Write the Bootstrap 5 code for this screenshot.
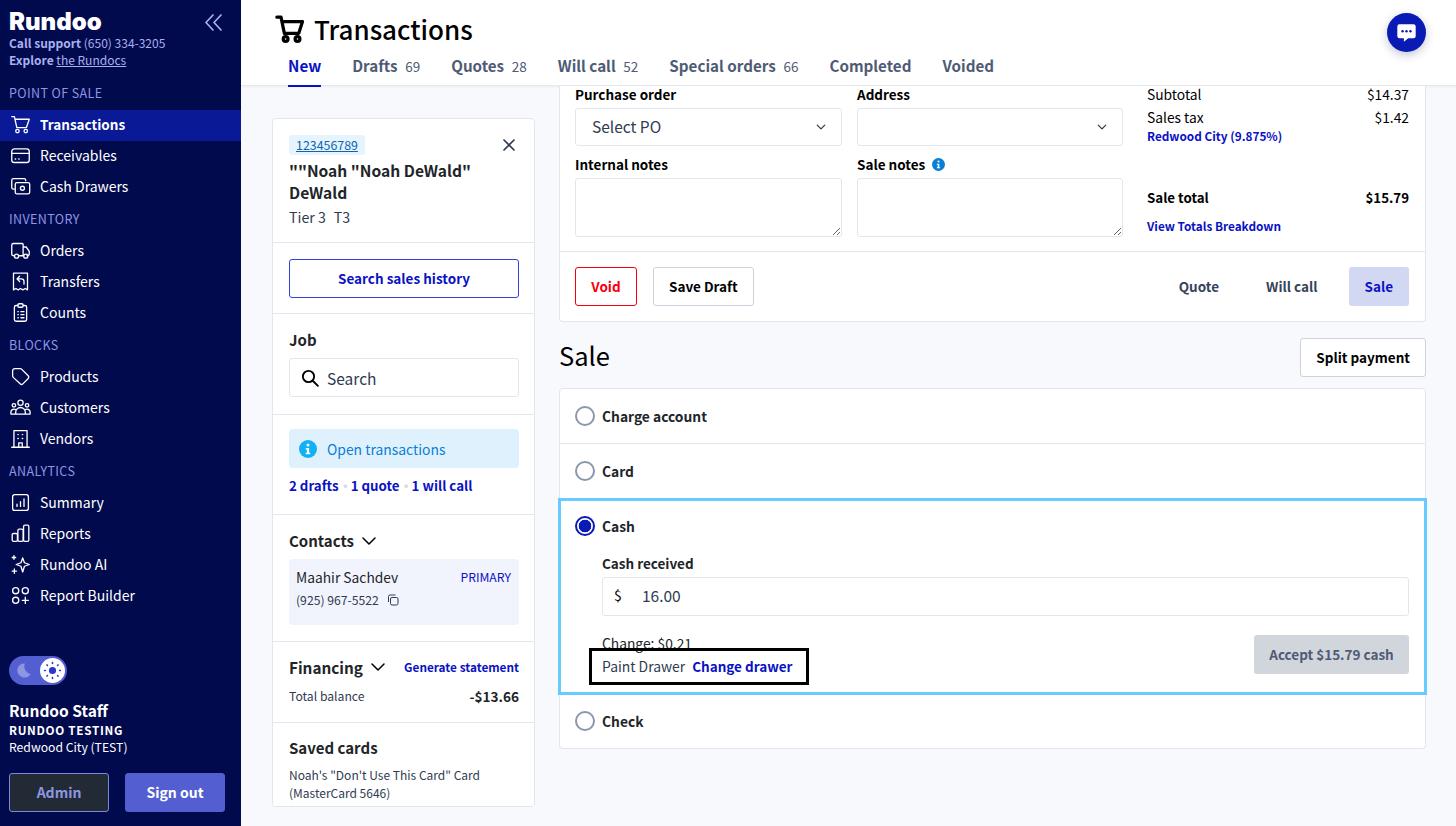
<!DOCTYPE html>
<html lang="en">
<head>
  <meta charset="UTF-8" />
  <meta name="viewport" content="width=device-width, initial-scale=1" />
  <title>Transactions</title>
  <link href="https://cdn.jsdelivr.net/npm/bootstrap@5.3.3/dist/css/bootstrap.min.css" rel="stylesheet" />
  <style>
    html, body { height: 100%; }
    body { font-family: "Noto Sans CJK SC", "Liberation Sans", sans-serif; font-size: 13.8px; line-height: 20px; background: #f8f9fc; color: #000; overflow: hidden; }
    a { text-decoration: none; }
    .sbw { font-weight: 600; }
    .txt-blue { color: #0a12c4; }
    .txt-slate { color: #2f3b52; }

    /* sidebar */
    .side { width: 241px; height: 826px; background: #020a4e; color: #fff; flex: none; }
    .side-logo { font-family: "Inter", sans-serif; font-weight: 900; font-size: 24px; line-height: 24px; padding: 10px 9px 0; }
    .side-collapse { margin: 13px 18px 0 0; }
    .side-help { padding: 0 9px; font-size: 12px; line-height: 17px; color: #a9b0ee; }
    .side-help a { color: #a9b0ee; text-decoration: underline; }
    .side-head { font-size: 12.5px; line-height: 20px; letter-spacing: .4px; color: #8e96e2; padding: 0 9px; margin-top: 5.5px; margin-bottom: 7.5px; }
    .side-head.first { margin-top: 15px; margin-bottom: 7px; }
    .side-link { color: #fff; height: 31px; padding: 0 10px 3px; gap: 9px; font-size: 14px; display: flex; align-items: center; }
    .side-link:hover, .side-link:focus { color: #fff; }
    .side-link.active { background: #0a1a96; font-weight: 700; font-size: 13.5px; }
    .side-link svg { width: 21px; height: 21px; flex: none; fill: none; stroke: #fff; stroke-width: 1.5; stroke-linecap: round; stroke-linejoin: round; }
    .side-toggle { width: 58px; height: 29px; border-radius: 15px; background: #535ed0; margin: 0 0 0 9px; padding: 2px; }
    .side-knob { width: 25px; height: 25px; border-radius: 50%; background: #fff; }
    .side-user { padding: 0 9px; margin-top: 14px; }
    .side-name { font-size: 15.5px; line-height: 22px; font-weight: 700; }
    .side-org { font-size: 11.7px; line-height: 17px; font-weight: 700; letter-spacing: .7px; }
    .side-loc { font-size: 12.2px; line-height: 19px; }
    .side-btns { padding: 16px 16px 14px 9px; gap: 16px; }
    .side-btns .btn { flex: 1; height: 39px; font-size: 14px; font-weight: 600; padding: 0; border-radius: 3px; }
    .btn-admin { background: #222b35; border: 1px solid #7f88d8; color: #8e96e2; }
    .btn-out { background: #535ed0; border: 1px solid #535ed0; color: #fff; }

    /* header */
    .top-bar { height: 86px; background: #fff; border-bottom: 1px solid #e6e8ee; box-shadow: 0 1px 2px rgba(20, 30, 60, .06); padding: 0 0 0 34px; flex: none; }
    .top-title { font-size: 26px; line-height: 36px; font-weight: 500; margin: 0; padding-top: 11px; gap: 9px; }
    .top-tabs { padding-left: 13px; gap: 31px; margin-top: 1px; }
    .top-tab { color: #4f5b75; font-size: 15.2px; font-weight: 600; line-height: 24px; padding: 5px 0 7px; border-bottom: 2px solid transparent; }
    .top-tab span { font-weight: 400; font-size: 13.5px; margin-left: 4.2px; }
    .top-tab.active { color: #0a12c4; border-bottom-color: #0a12c4; }
    .chat-btn { top: 13px; right: 30px; width: 39px; height: 39px; border-radius: 50%; background: #0a1ab4; box-shadow: 0 3px 10px rgba(20, 30, 90, .25); }

    /* cards */
    .page-body { padding: 0 30px 0 31px; gap: 24px; }
    .cust-card { width: 263px; height: 689px; margin-top: 32px; flex: none; overflow: hidden; border-color: #e3e6ee; border-radius: 4px; }
    .cust-card .list-group-item { padding: 16px 15px 16px 16px; border-color: #e3e6ee; }
    .cust-id { background: #e7f4fd; color: #0a66b0; font-size: 12.4px; line-height: 20px; padding: 0 7px; border-radius: 3px; text-decoration: underline; }
    .cust-name { font-size: 15.6px; line-height: 22px; font-weight: 700; }
    .cust-tier { font-size: 14.2px; gap: 8px; }
    .cust-h { font-size: 15px; line-height: 20px; font-weight: 600; }
    .btn-hist { height: 39px; border: 1px solid #3340e0; color: #0a12c4; font-weight: 600; border-radius: 3px; padding: 0; font-size: 13.5px; }
    .fake-input { height: 39px; border: 1px solid #e3e6ee; border-radius: 3px; padding: 0 11px; gap: 8px; font-size: 15.5px; color: #2f3b52; }
    .info-box { height: 39px; background: #dff1fd; border-radius: 4px; color: #0a7ed8; padding: 0 10px; gap: 10px; font-size: 13.9px; }
    .tx-links { font-size: 13.3px; }
    .dot-sep { color: #d6dae4; display: inline-block; width: 12px; text-align: center; overflow: hidden; vertical-align: top; }
    .contact-box { height: 66px; background: #f2f4fd; border-radius: 3px; padding: 8px 8px 0 7px; }
    .fin-h { font-size: 15.3px; line-height: 24px; font-weight: 600; }
    .link-sm { font-size: 11.8px; font-weight: 600; color: #0a12c4; white-space: nowrap; }
    .card-note { font-size: 12px; line-height: 18px; color: #2f3b52; }

    .sale-col { min-width: 0; }
    .order-card { border-color: #e3e6ee; border-top: 0; border-radius: 0 0 4px 4px; height: 236px; }
    .order-top { padding: 0 16px 0 15px; height: 166px; gap: 15px; }
    .order-left { width: 267px; flex: none; }
    .order-mid { width: 266px; flex: none; }
    .order-sum { flex: 1; margin-left: 9px; line-height: 16px; }
    .fld-label { font-size: 13.5px; line-height: 16px; font-weight: 600; display: block; margin-bottom: 6px; }
    .fld-label.lower { margin-top: 10px; }
    .order-top .form-select, .order-top .form-control { border-color: #e3e6ee; border-radius: 3px; box-shadow: none; }
    .order-top .form-select { height: 38px; font-size: 15.5px; color: #2f3b52; padding: 0 16px; background-position: right 14px center; background-size: 12px 10px; }
    .order-top .form-control { height: 59px; }
    .sum-link { font-size: 11.8px; line-height: 17px; }
    .order-foot { border-top: 1px solid #e3e6ee; padding: 15px 16px 15px 15px; }
    .btn-void { color: #f5000f; border: 1px solid #f5000f; background: #fff; font-weight: 600; height: 39px; width: 62px; padding: 0; font-size: 13.5px; border-radius: 3px; }
    .btn-plain { color: #000; border: 1px solid #cdd2de; background: #fff; font-weight: 600; height: 39px; padding: 0 15px; font-size: 13.5px; border-radius: 3px; }
    .btn-ghost { color: #36435c; font-weight: 600; height: 39px; padding: 0 16px; font-size: 13.5px; border: 0; }
    .btn-sale { color: #0a12c4; background: #d2d7f2; font-weight: 600; height: 39px; padding: 0 16px; font-size: 13.5px; border: 0; border-radius: 3px; }
    .foot-right { gap: 15px; }
    .sale-h { font-size: 25.5px; line-height: 36px; font-weight: 400; margin: 0; padding-bottom: 4px; }
    .sale-row { height: 38px; margin: 16px 0 12px; }
    .pay-list { border-radius: 4px; overflow: visible; }
    .pay-list .list-group-item { border-color: #e3e6ee; padding: 0 15px; }
    .pay-rad { height: 54px; gap: 7px; font-weight: 700; font-size: 13.8px; }
    .pay-rad .form-check-input { width: 20px; height: 20px; margin: 0; border: 2px solid #8b97aa; flex: none; }
    .pay-rad .form-check-input:checked { border-color: #0a1ab4; background-color: #fff; background-image: radial-gradient(circle, #0a1ab4 0 6px, #fff 6.6px); }
    .pay-list .pay-cash.list-group-item { border: 3px solid #66ccff; margin: -1px; height: 197px; position: relative; z-index: 1; padding: 0 15px 0 14px; }
    .pay-cash .pay-rad { height: 50px; }
    .pay-rest { padding-left: 27px; padding-top: 4px; }
    .cash-field { height: 39px; border: 1px solid #e3e6ee; border-radius: 3px; padding: 0 11px 3px; font-size: 15.5px; color: #2f3b52; }
    .cash-field b { font-weight: 400; color: #000; width: 28px; font-size: 14px; }
    .cash-foot { margin-top: 19px; }
    .change-line { line-height: 16px; }
    .drawer-box { border: 3px solid #000; height: 37px; margin: -3px 0 0 -13px; padding: 0 10px 2px; width: 220px; gap: 7px; position: relative; white-space: nowrap; font-size: 13.5px; }
    .drawer-box .txt-slate { font-size: 13.9px; }
    .btn-accept { background: #d1d5dc; color: #4f5b75; font-weight: 600; height: 39px; width: 155px; padding: 0; font-size: 13.5px; border: 0; border-radius: 3px; }
    .btn-accept:disabled { background: #d1d5dc; color: #4f5b75; opacity: 1; }
  </style>
</head>
<body class="d-flex">
  <aside class="side d-flex flex-column">
    <div class="d-flex justify-content-between">
      <div class="side-logo">Rundoo</div>
      <svg class="side-collapse" width="19" height="19" viewBox="0 0 19 19" fill="none" stroke="#a9b0ee" stroke-width="1.7" stroke-linecap="round" stroke-linejoin="round"><path d="M9 2 2 9.500 9 17M17 2l-7 7.500 7 7.500"/></svg>
    </div>
    <div class="side-help"><span class="sbw">Call support</span> (650) 334-3205<br><span class="sbw">Explore</span> <a href="#">the Rundocs</a></div>
    <div class="side-head first">POINT OF SALE</div>
    <nav class="nav flex-column">
      <a class="side-link active" href="#"><svg viewBox="0 0 24 24"><path d="M2 3h3l2.800 12.500h11L22 6H6"/><circle cx="8.500" cy="19.500" r="2"/><circle cx="18" cy="19.500" r="2"/></svg>Transactions</a>
      <a class="side-link" href="#"><svg viewBox="0 0 24 24"><rect x="2" y="4.500" width="20" height="15.500" rx="3"/><path d="M2 9.500h20M6 16h.5M10 16h.5"/></svg>Receivables</a>
      <a class="side-link" href="#"><svg viewBox="0 0 24 24"><path d="M18 5.500V5a2 2 0 0 0-2-2H4a2 2 0 0 0-2 2v8a2 2 0 0 0 2 2h1"/><rect x="6" y="7.500" width="16.500" height="13" rx="2"/><circle cx="14.200" cy="14" r="2.300"/></svg>Cash Drawers</a>
    </nav>
    <div class="side-head">INVENTORY</div>
    <nav class="nav flex-column">
      <a class="side-link" href="#"><svg viewBox="0 0 24 24"><path d="M5 18H4a2 2 0 0 1-2-2V6a2 2 0 0 1 2-2h10a1 1 0 0 1 1 1v13H10M15 8h3.500l3.500 5v3a2 2 0 0 1-2 2h-.5M15 18h.5"/><circle cx="7.500" cy="18.500" r="2.300"/><circle cx="18" cy="18.500" r="2.300"/></svg>Orders</a>
      <a class="side-link" href="#"><svg viewBox="0 0 24 24"><path d="M4 2.500h16v19l-2.700-1.500-2.600 1.500-2.700-1.500-2.700 1.500L6.700 20 4 21.500z"/><path d="M11 6 8 9l3 3M8 9h5a3 3 0 0 1 3 3v3"/></svg>Transfers</a>
      <a class="side-link" href="#"><svg viewBox="0 0 24 24"><path d="M9 4H7a2 2 0 0 0-2 2v14a2 2 0 0 0 2 2h10a2 2 0 0 0 2-2V6a2 2 0 0 0-2-2h-2"/><rect x="9" y="2" width="6" height="4" rx="1.500"/><path d="M9 11h.5M12.500 11H16M9 14.500h.5M12.500 14.500H16M9 18h.5M12.500 18H16"/></svg>Counts</a>
    </nav>
    <div class="side-head">BLOCKS</div>
    <nav class="nav flex-column">
      <a class="side-link" href="#"><svg viewBox="0 0 24 24"><path d="M3 5.500A2.500 2.500 0 0 1 5.500 3h6.300a2 2 0 0 1 1.400.6l7.600 7.600a2.200 2.200 0 0 1 0 3.100l-6.100 6.100a2.200 2.200 0 0 1-3.100 0L3.700 13A2.500 2.500 0 0 1 3 11.200z"/></svg>Products</a>
      <a class="side-link" href="#"><svg viewBox="0 0 24 24"><circle cx="12" cy="6.500" r="3"/><circle cx="4.500" cy="9.500" r="2"/><circle cx="19.500" cy="9.500" r="2"/><path d="M6.500 19.500v-2a5.500 5.500 0 0 1 11 0v2zM6.500 19.500H1v-2a3.500 3.500 0 0 1 6-2.500M17.500 19.500H23v-2a3.500 3.500 0 0 0-6-2.500"/></svg>Customers</a>
      <a class="side-link" href="#"><svg viewBox="0 0 24 24"><path d="M2 22h20M4.500 22V3h15v19M10 22v-5h4v5M9 7.500h.5M14 7.500h.5M9 12h.5M14 12h.5"/></svg>Vendors</a>
    </nav>
    <div class="side-head">ANALYTICS</div>
    <nav class="nav flex-column">
      <a class="side-link" href="#"><svg viewBox="0 0 24 24"><rect x="3" y="3" width="18" height="18" rx="2.500"/><path d="M8 16.500V14M12 16.500V11M16 16.500V8"/></svg>Summary</a>
      <a class="side-link" href="#"><svg viewBox="0 0 24 24"><rect x="2.500" y="12" width="6" height="9" rx="1.500"/><rect x="9" y="7" width="6" height="14" rx="1.500"/><rect x="15.500" y="2.500" width="6" height="18.500" rx="1.500"/></svg>Reports</a>
      <a class="side-link" href="#"><svg viewBox="0 0 24 24"><path d="M14.500 4.500 16.500 10l5.500 2-5.500 2-2 6.500-2-6.500-5.500-2 5.500-2zM4.500 2v4M2.500 4h4M5 17v5M2.500 19.500h5"/></svg>Rundoo AI</a>
      <a class="side-link" href="#"><svg viewBox="0 0 24 24"><circle cx="6.500" cy="6.500" r="3.500"/><circle cx="17.500" cy="6.500" r="3.500"/><circle cx="6.500" cy="17.500" r="3.500"/><path d="M17.500 14v7M14 17.500h7"/></svg>Report Builder</a>
    </nav>
    <div class="mt-auto">
      <div class="side-toggle d-flex justify-content-between align-items-center">
        <svg class="ms-1" width="17" height="17" viewBox="0 0 24 24"><path d="M14 2a10 10 0 1 0 8 15A11 11 0 0 1 14 2z" fill="#8e96e2"/></svg>
        <span class="side-knob d-flex align-items-center justify-content-center">
          <svg width="19" height="19" viewBox="0 0 24 24" fill="#2a38c8" stroke="#2a38c8" stroke-width="2" stroke-linecap="round"><circle cx="12" cy="12" r="4.500" stroke="none"/><path d="M12 2v1M12 21v1M2 12h1M21 12h1M5 5l.6.6M18.400 18.400l.6.6M5 19l.6-.6M18.400 5.600 19 5"/></svg>
        </span>
      </div>
      <div class="side-user">
        <div class="side-name">Rundoo Staff</div>
        <div class="side-org">RUNDOO TESTING</div>
        <div class="side-loc">Redwood City (TEST)</div>
      </div>
      <div class="side-btns d-flex">
        <button class="btn btn-admin">Admin</button>
        <button class="btn btn-out">Sign out</button>
      </div>
    </div>
  </aside>

  <main class="flex-grow-1 d-flex flex-column position-relative" style="min-width:0">
    <header class="top-bar">
      <h1 class="top-title d-flex align-items-center">
        <svg width="30" height="30" viewBox="0 0 24 24" fill="none" stroke="#000" stroke-width="2.600" stroke-linecap="round" stroke-linejoin="round"><path d="M1.500 2.500h3.300l2.700 13h11.500L22 6H5.500"/><circle cx="8.500" cy="20" r="1.900"/><circle cx="18" cy="20" r="1.900"/></svg>
        Transactions
      </h1>
      <nav class="top-tabs d-flex">
        <a class="top-tab active" href="#">New</a>
        <a class="top-tab" href="#">Drafts <span>69</span></a>
        <a class="top-tab" href="#">Quotes <span>28</span></a>
        <a class="top-tab" href="#">Will call <span>52</span></a>
        <a class="top-tab" href="#">Special orders <span>66</span></a>
        <a class="top-tab" href="#">Completed</a>
        <a class="top-tab" href="#">Voided</a>
      </nav>
    </header>
    <button class="btn chat-btn position-absolute d-flex align-items-center justify-content-center p-0" aria-label="Chat">
      <svg width="21" height="21" viewBox="0 0 24 24"><path d="M4 2.500h16a2.500 2.500 0 0 1 2.500 2.500v11a2.500 2.500 0 0 1-2.500 2.500h-6L9 22.500v-4H4A2.500 2.500 0 0 1 1.500 16V5A2.500 2.500 0 0 1 4 2.500z" fill="#fff"/><circle cx="7.500" cy="10.500" r="1.400" fill="#0a1ab4"/><circle cx="12" cy="10.500" r="1.400" fill="#0a1ab4"/><circle cx="16.500" cy="10.500" r="1.400" fill="#0a1ab4"/></svg>
    </button>

    <div class="page-body d-flex flex-grow-1">
      <section class="card cust-card">
        <div class="list-group list-group-flush">
          <div class="list-group-item" style="height:124px">
            <div class="d-flex justify-content-between align-items-start">
              <a class="cust-id" href="#">123456789</a>
              <svg class="me-1 mt-1" width="12" height="12" viewBox="0 0 12 12" stroke="#2f3b52" stroke-width="1.700" stroke-linecap="round"><path d="M1 1l10 10M11 1 1 11"/></svg>
            </div>
            <div class="cust-name mt-1">""Noah "Noah DeWald" DeWald</div>
            <div class="txt-slate cust-tier d-flex mt-1"><span>Tier 3</span><span>T3</span></div>
          </div>
          <div class="list-group-item" style="height:71px">
            <button class="btn btn-hist w-100">Search sales history</button>
          </div>
          <div class="list-group-item" style="height:101px">
            <div class="cust-h" style="margin-bottom:8px">Job</div>
            <div class="fake-input d-flex align-items-center">
              <svg width="18" height="18" viewBox="0 0 24 24" fill="none" stroke="#000" stroke-width="2.500" stroke-linecap="round"><circle cx="10" cy="10" r="7.500"/><path d="m16 16 6.500 6.500"/></svg>
              Search
            </div>
          </div>
          <div class="list-group-item" style="height:100px;padding-top:14px">
            <div class="info-box d-flex align-items-center">
              <svg width="18" height="18" viewBox="0 0 24 24"><circle cx="12" cy="12" r="12" fill="#12b0f5"/><circle cx="12" cy="6.500" r="2" fill="#fff"/><path d="M9 10.500h4.500V17H15v2H9v-2h1.500v-4.500H9z" fill="#fff"/></svg>
              Open transactions
            </div>
            <div class="mt-2 sbw tx-links"><a class="txt-blue" href="#">2 drafts</a><span class="dot-sep">·</span><a class="txt-blue" href="#">1 quote</a><span class="dot-sep">·</span><a class="txt-blue" href="#">1 will call</a></div>
          </div>
          <div class="list-group-item" style="height:127px;padding-top:16px">
            <div class="cust-h d-flex align-items-center gap-2" style="margin-bottom:8px">Contacts
              <svg width="14" height="8" viewBox="0 0 14 8" fill="none" stroke="#000" stroke-width="1.500" stroke-linecap="round" stroke-linejoin="round"><path d="m1 1 6 6 6-6"/></svg>
            </div>
            <div class="contact-box">
              <div class="d-flex justify-content-between">
                <span>Maahir Sachdev</span>
                <span class="txt-blue" style="font-size:12.200px">PRIMARY</span>
              </div>
              <div class="txt-slate d-flex align-items-center gap-2" style="font-size:12.200px;margin-top:3px">(925) 967-5522
                <svg width="12" height="12" viewBox="0 0 24 24" fill="none" stroke="#2f3b52" stroke-width="2"><rect x="7" y="7" width="15" height="15" rx="3"/><path d="M3 16V5a3 3 0 0 1 3-3h11"/></svg>
              </div>
            </div>
          </div>
          <div class="list-group-item" style="height:81px;padding-top:13px">
            <div class="d-flex justify-content-between align-items-center">
              <span class="fin-h d-flex align-items-center gap-2">Financing
                <svg width="14" height="8" viewBox="0 0 14 8" fill="none" stroke="#000" stroke-width="1.500" stroke-linecap="round" stroke-linejoin="round"><path d="m1 1 6 6 6-6"/></svg>
              </span>
              <a class="link-sm" href="#">Generate statement</a>
            </div>
            <div class="d-flex justify-content-between align-items-center" style="margin-top:7px">
              <span class="txt-slate" style="font-size:12.200px">Total balance</span>
              <span class="sbw" style="font-size:13.600px">-$13.66</span>
            </div>
          </div>
          <div class="list-group-item" style="height:85px;padding-top:15px">
            <div class="cust-h" style="margin-bottom:8px">Saved cards</div>
            <div class="card-note">Noah's "Don't Use This Card" Card (MasterCard 5646)</div>
          </div>
        </div>
      </section>

      <section class="sale-col flex-grow-1">
        <div class="card order-card">
          <div class="order-top d-flex">
            <div class="order-left">
              <label class="fld-label">Purchase order</label>
              <select class="form-select"><option>Select PO</option></select>
              <label class="fld-label lower">Internal notes</label>
              <textarea class="form-control"></textarea>
            </div>
            <div class="order-mid">
              <label class="fld-label">Address</label>
              <select class="form-select"><option></option></select>
              <label class="fld-label lower">Sale notes
                <svg class="ms-1" width="13" height="13" viewBox="0 0 24 24" style="vertical-align:-1px"><circle cx="12" cy="12" r="12" fill="#0a7ed8"/><circle cx="12" cy="6.500" r="2" fill="#fff"/><path d="M9 10.500h4.500V17H15v2H9v-2h1.500v-4.500H9z" fill="#fff"/></svg>
              </label>
              <textarea class="form-control"></textarea>
            </div>
            <div class="order-sum">
              <div class="d-flex justify-content-between" style="margin-bottom:7px"><span>Subtotal</span><span>$14.37</span></div>
              <div class="d-flex justify-content-between"><span>Sales tax</span><span>$1.42</span></div>
              <a class="link-sm sum-link d-block" style="margin-top:1.500px" href="#">Redwood City (9.875%)</a>
              <div class="d-flex justify-content-between sbw" style="margin-top:46px;font-size:13.300px"><span>Sale total</span><span>$15.79</span></div>
              <a class="link-sm sum-link d-block" style="margin-top:11px" href="#">View Totals Breakdown</a>
            </div>
          </div>
          <div class="order-foot d-flex">
            <button class="btn btn-void me-3">Void</button>
            <button class="btn btn-plain">Save Draft</button>
            <div class="ms-auto d-flex foot-right">
              <button class="btn btn-ghost">Quote</button>
              <button class="btn btn-ghost">Will call</button>
              <button class="btn btn-sale">Sale</button>
            </div>
          </div>
        </div>

        <div class="sale-row d-flex justify-content-between align-items-center">
          <h2 class="sale-h">Sale</h2>
          <button class="btn btn-plain">Split payment</button>
        </div>

        <div class="list-group pay-list">
          <div class="list-group-item"><label class="pay-rad d-flex align-items-center"><input class="form-check-input" type="radio" name="pay">Charge account</label></div>
          <div class="list-group-item"><label class="pay-rad d-flex align-items-center"><input class="form-check-input" type="radio" name="pay">Card</label></div>
          <div class="list-group-item pay-cash">
            <label class="pay-rad d-flex align-items-center"><input class="form-check-input" type="radio" name="pay" checked>Cash</label>
            <div class="pay-rest">
              <div class="fld-label">Cash received</div>
              <div class="cash-field d-flex align-items-center"><b>$</b>16.00</div>
              <div class="cash-foot d-flex justify-content-between align-items-start">
                <div>
                  <div class="change-line">Change: $0.21</div>
                  <div class="drawer-box d-flex align-items-center"><span class="txt-slate">Paint Drawer</span><a class="sbw txt-blue" href="#">Change drawer</a></div>
                </div>
                <button class="btn btn-accept" disabled>Accept $15.79 cash</button>
              </div>
            </div>
          </div>
          <div class="list-group-item"><label class="pay-rad d-flex align-items-center"><input class="form-check-input" type="radio" name="pay">Check</label></div>
        </div>
      </section>
    </div>
  </main>
</body>
</html>
